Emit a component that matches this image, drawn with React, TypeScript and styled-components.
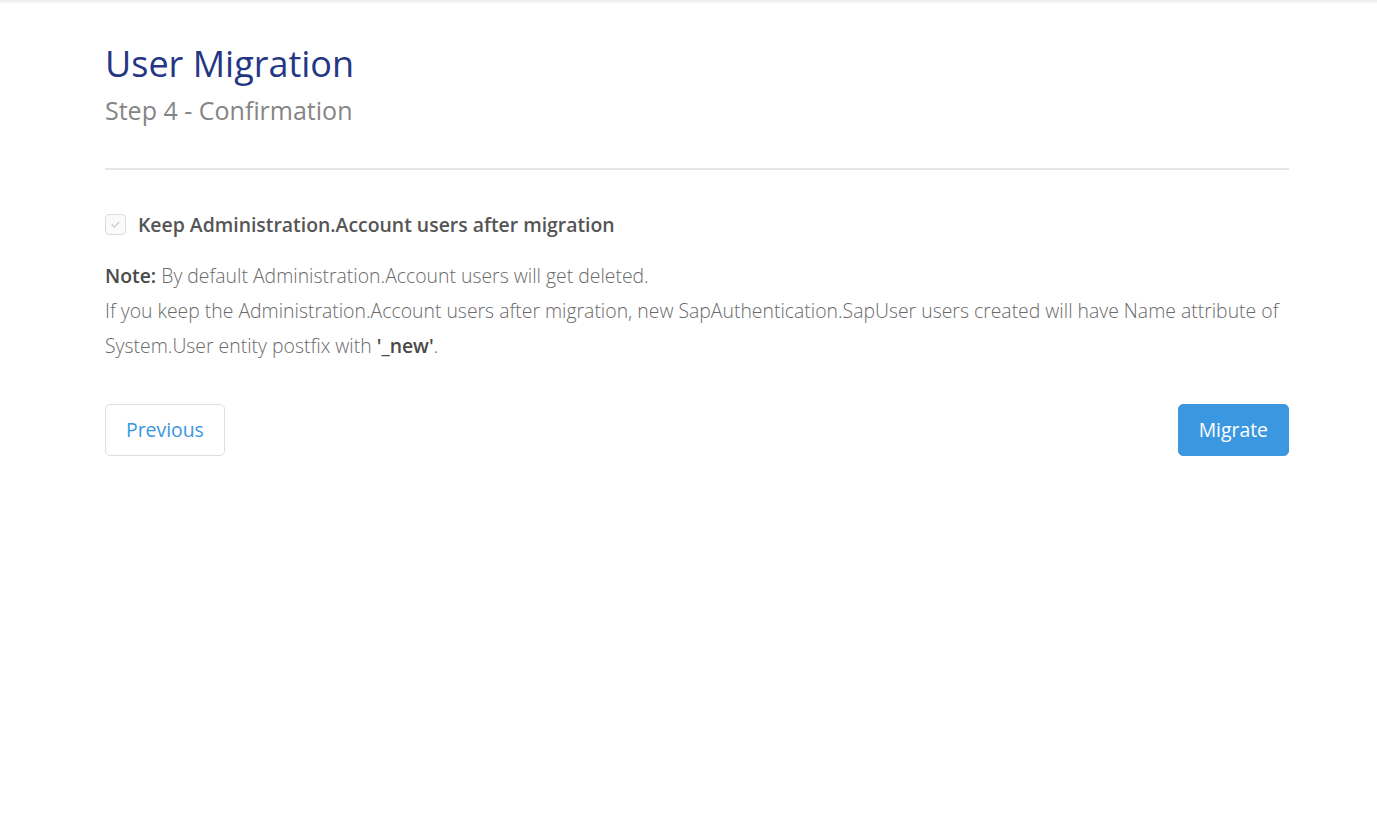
import styled, { createGlobalStyle } from "styled-components";

const GlobalStyle = createGlobalStyle`
  html, body {
    margin: 0;
    padding: 0;
    background: #ffffff;
    font-family: "Open Sans", "Liberation Sans", sans-serif;
  }
`;

export default function App() {
  return (
    <>
      <GlobalStyle />
      <Page>
        <TopShade />
        <Content>
          <Header>
            <Title>User Migration</Title>
            <Subtitle>Step 4 - Confirmation</Subtitle>
          </Header>
          <Divider />
          <CheckRow>
            <CheckBox>
              <svg viewBox="0 0 12 12" width="11" height="11">
                <path
                  d="M2.2 6.3 L4.8 8.7 L9.8 3.4"
                  fill="none"
                  stroke="#c9c9c9"
                  strokeWidth="1.3"
                  strokeLinecap="round"
                  strokeLinejoin="round"
                />
              </svg>
            </CheckBox>
            <CheckLabel>Keep Administration.Account users after migration</CheckLabel>
          </CheckRow>
          <Note>
            <Line>
              <strong>Note:</strong> By default Administration.Account users will get deleted.
            </Line>
            <Line>
              If you keep the Administration.Account users after migration, new
              SapAuthentication.SapUser users created will have Name attribute of
              System.User entity postfix with <strong>'_new'</strong>.
            </Line>
          </Note>
          <Actions>
            <Button>Previous</Button>
            <Button $primary>Migrate</Button>
          </Actions>
        </Content>
      </Page>
    </>
  );
}

const Page = styled.div`
  min-height: 836px;
  position: relative;
`;

const TopShade = styled.div`
  position: absolute;
  top: 0;
  left: 0;
  right: 0;
  height: 4px;
  background: linear-gradient(#ececec, rgba(255, 255, 255, 0));
`;

const Content = styled.div`
  padding: 38px 88px 0 105px;
  display: flex;
  flex-direction: column;
`;

const Header = styled.div`
  display: flex;
  flex-direction: column;
`;

const Title = styled.h1`
  margin: 0;
  font-size: 36px;
  font-weight: 400;
  line-height: 52px;
  color: #253784;
`;

const Subtitle = styled.h2`
  margin: 0;
  font-size: 25px;
  font-weight: 400;
  line-height: 40px;
  color: #858585;
`;

const Divider = styled.hr`
  margin: 38px 0 0;
  border: none;
  border-top: 2px solid #e6e6e6;
`;

const CheckRow = styled.label`
  display: flex;
  align-items: center;
  gap: 12px;
  margin-top: 41px;
`;

const CheckBox = styled.span`
  width: 19px;
  height: 19px;
  border: 1px solid #dcdcdc;
  border-radius: 4px;
  display: flex;
  align-items: center;
  justify-content: center;
  background: #fafafa;
`;

const CheckLabel = styled.span`
  font-size: 19.4px;
  font-weight: 600;
  color: #555555;
`;

const Note = styled.div`
  margin-top: 20px;
  font-size: 19.4px;
  font-weight: 300;
  line-height: 35px;
  color: #6a6a6a;

  strong {
    font-weight: 600;
    color: #4a4a4a;
  }
`;

const Line = styled.p`
  margin: 0;
`;

const Actions = styled.div`
  display: flex;
  justify-content: space-between;
  margin-top: 41px;
`;

const Button = styled.button<{ $primary?: boolean }>`
  height: 52px;
  padding: 0 20px 2px;
  font-family: "Open Sans", "Liberation Sans", sans-serif;
  font-size: 19.4px;
  font-weight: 400;
  border-radius: 5px;
  cursor: pointer;
  border: 1px solid ${(p) => (p.$primary ? "#3a97e0" : "#dedede")};
  background: ${(p) => (p.$primary ? "#3a97e0" : "#ffffff")};
  color: ${(p) => (p.$primary ? "#ffffff" : "#3a97e0")};
`;
